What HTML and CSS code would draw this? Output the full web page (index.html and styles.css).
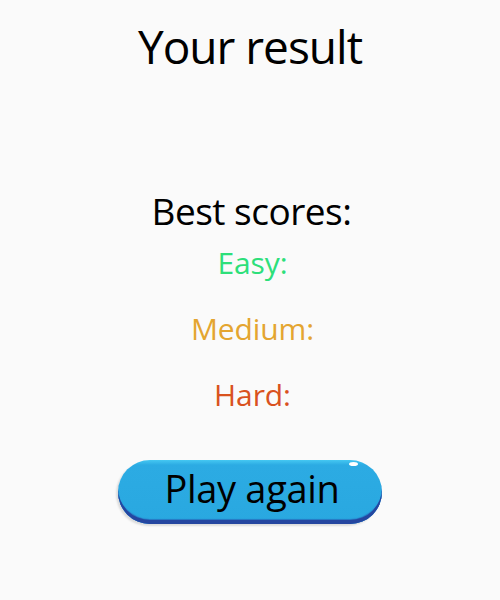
FILE: index.html
```html
<!DOCTYPE html>
<html>
<head>
<meta charset="utf-8">
<link rel="stylesheet" href="styles.css">
</head>
<body>
<main class="screen">
  <h1 class="title">Your result</h1>
  <h2 class="best">Best scores:</h2>
  <ul class="scores">
    <li class="score easy">Easy:</li>
    <li class="score medium">Medium:</li>
    <li class="score hard">Hard:</li>
  </ul>
  <button class="play">Play again<span class="shine"></span></button>
</main>
</body>
</html>
```
FILE: styles.css
```css
html, body {
  margin: 0;
  padding: 0;
  background: #fafafa;
}
.screen {
  width: 500px;
  height: 600px;
  display: flex;
  flex-direction: column;
  align-items: center;
  font-family: "Open Sans", "Noto Sans", sans-serif;
  color: #000;
}
.title {
  margin: 16px 0 0;
  font-size: 46px;
  letter-spacing: -1px;
  line-height: 60px;
  font-weight: 400;
}
.best {
  margin: 112px 0 0 3px;
  font-size: 37px;
  letter-spacing: -0.5px;
  line-height: 46px;
  font-weight: 400;
}
.scores {
  list-style: none;
  margin: 9px 0 0 5px;
  padding: 0;
  display: flex;
  flex-direction: column;
  align-items: center;
  gap: 26px;
}
.score {
  font-size: 30px;
  letter-spacing: -0.1px;
  line-height: 40px;
}
.easy { color: #2ddf7a; }
.medium { color: #e4a530; }
.hard { color: #d9521e; }
.play {
  position: relative;
  margin-top: 45px;
  width: 264px;
  height: 64px;
  border: none;
  border-radius: 32px;
  padding: 0 0 9px 4px;
  font-family: inherit;
  font-size: 38px;
  letter-spacing: -0.3px;
  color: #000;
  background: linear-gradient(#45c8f2 0, #2cabe3 5px, #29a8e0 100%);
  box-shadow: inset 0 -4px 0 #2546a0, inset 0 -6px 1px -1px #2677c4, -2px 2px 2px rgba(0,0,0,0.12);
}
.shine {
  position: absolute;
  top: 2px;
  right: 24px;
  width: 9px;
  height: 4px;
  border-radius: 50%;
  background: #ffffff;
}
```
